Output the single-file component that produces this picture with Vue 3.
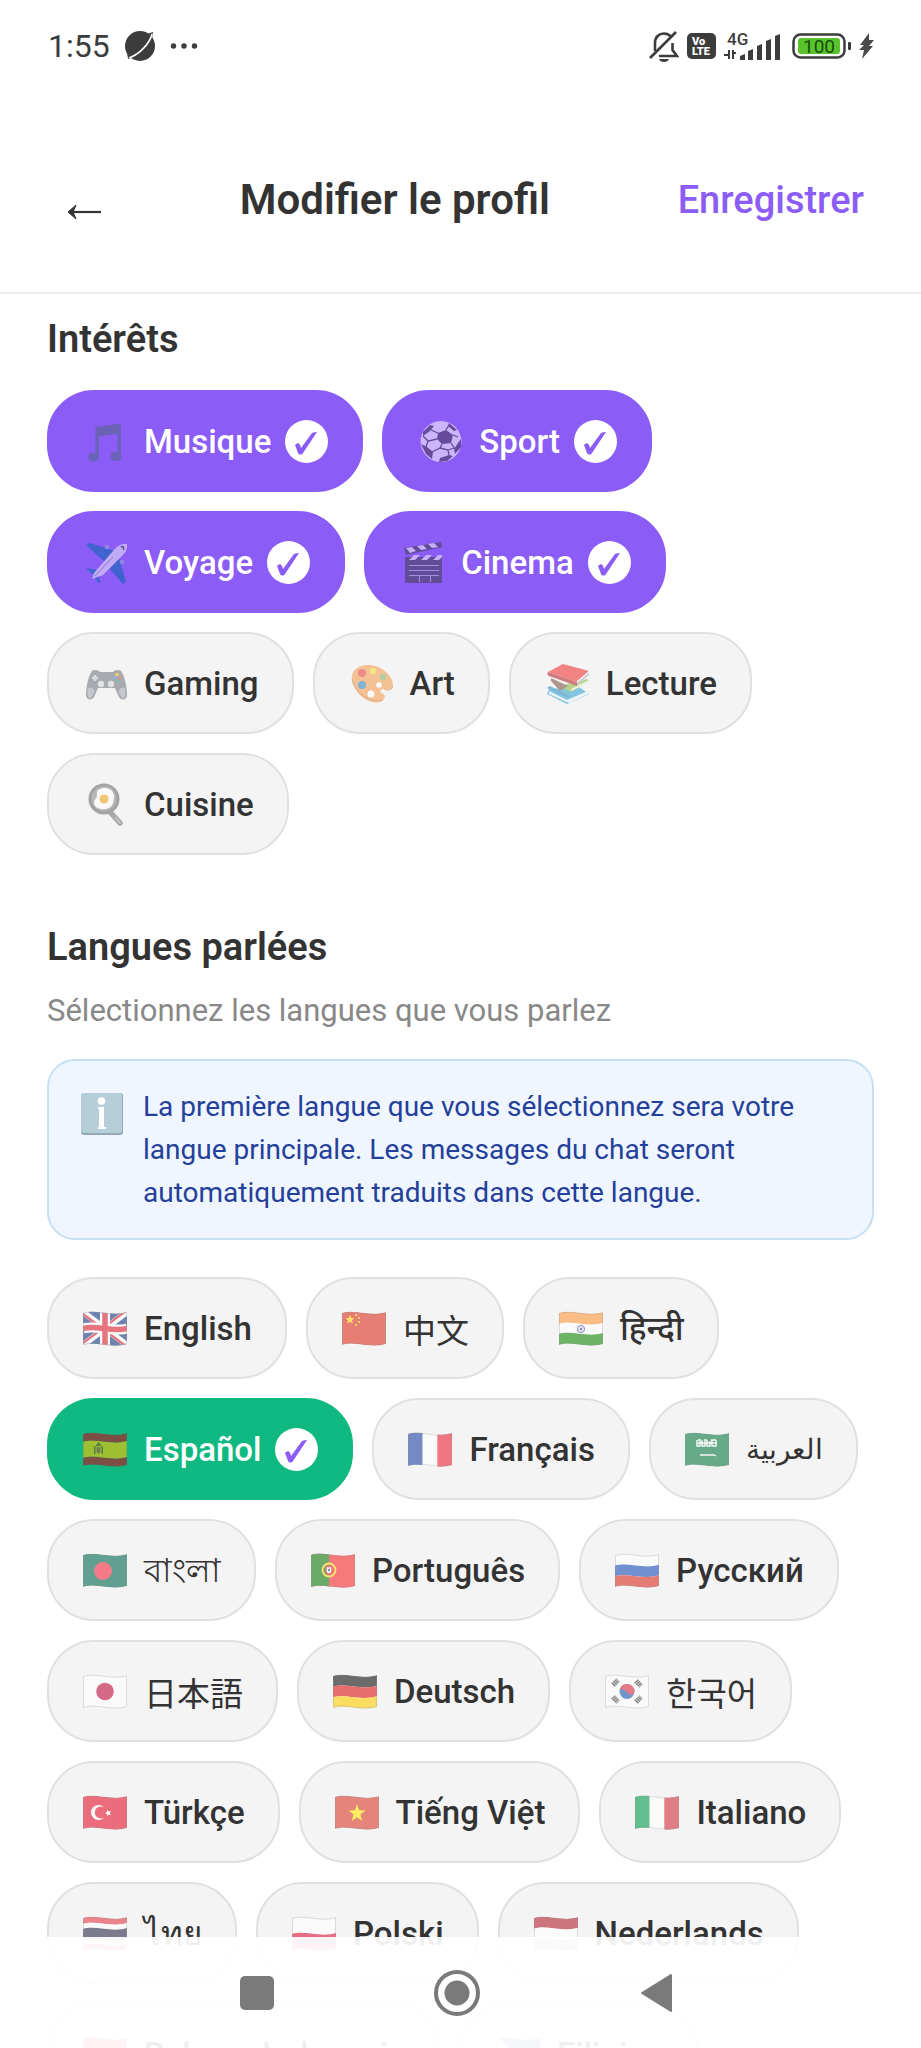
<script setup>
import { ref } from 'vue'

// one wavy stripe of a flag, y0..y1 inside a 44x32 flag
const band = (fill, y0, y1) =>
  `<path fill="${fill}" d="M0 ${y0 + 7}C13 ${y0 + 3} 29 ${y0 + 11} 44 ${y0 + 6}V${y1 + 6}C29 ${y1 + 11} 13 ${y1 + 3} 0 ${y1 + 7}Z"/>`
const column = (fill, x0, x1) => `<rect fill="${fill}" x="${x0}" y="4" width="${x1 - x0}" height="38"/>`
const flag = (inner) =>
  `<g clip-path="url(#wave)">${inner}</g><path fill="none" stroke="#555" stroke-opacity=".3" d="M.5 7.3C13 3.5 29 11.3 43.5 6.7V37.5C29 42.2 13 34.2.5 38.4Z"/>`

const icons = {
  music: `<path fill="#56688f" d="M12.500 8 38 4.500V37h-3.500V15L16 17.500V38h-3.500z"/><ellipse cx="10.500" cy="38" rx="5.500" ry="4.500" fill="#56688f"/><ellipse cx="33" cy="37.500" rx="5.500" ry="4.500" fill="#56688f"/>`,
  ball: `<circle cx="23" cy="22.500" r="20.500" fill="#f7f0ff"/><g fill="#4c405d"><path d="m20 14 8-3 7 5-2 8-9 1-5-5z"/><path d="M5 13 12 6l4 1-4 5-7 5zM31 4l8 7-3 1-6-5zM40 24l3-4v8l-6 7-1-5zM9 28l6 5-1 7-6-5-5-10zM22 39l9-3 4 1-6 5-8 1z"/></g><path fill="none" stroke="#4c405d" stroke-width="1.300" d="M20 14 13 11M28 11l3-5M35 16l5 2M33 24l4 6M24 25l-2 4-8 4M19 20l-9 2-2 6M22 29l8 2 1 5M30 31l6-2M10 22l-5-5"/>`,
  plane: `<path fill="#0f68b8" d="M3 5 7 3l25 8-9 12zM36 18l7 23-3 3-14-16zM3 28l12 2-4 6zM14 35l4 7-3 1-3-6z"/><circle cx="24" cy="7" r="2.300" fill="#9aa5d8"/><circle cx="39" cy="22" r="2.300" fill="#9aa5d8"/><path fill="#e6e0f5" d="M44 4c1 4-1 8-4 11L20 35 9 39l2-6 19-22c4-5 9-8 14-7z"/><path fill="none" stroke="#39445c" stroke-width="1.600" d="M38 7c2-1 3 0 2.500 3"/><path stroke="#8f88c4" d="m12 36 18-19"/>`,
  clap: `<path fill="#46425a" d="M5 17h37v26H5z"/><path fill="#46425a" d="m4 8 37-6 1 5L6 15z"/><g fill="#efe6fb"><path d="m6 8 6-1 4 4-6 2zM17 6l6-1 4 4-6 1zM28 4l6-1 4 4-6 1zM9 20l5-5h6l-5 5zM21 20l5-5h6l-5 5zM33 20l5-5h4v2l-3 3z"/></g><path stroke="#b9acd8" d="M9 25.500h30M9 30.500h30M9 35.500h30M19.500 36v6M30.500 36v6"/>`,
  pad: `<path fill="#747982" d="M9 10c2-2 7-1 8 1h13c1-2 6-3 8-1 4 5 6 17 6 24 0 5-6 6-8 2l-4-9H15l-4 9c-2 4-8 3-8-2 0-7 2-19 6-24z"/><path fill="#a7aab3" d="M5 27c4-1 7 1 6 5l-3 5c-3 1-4-2-3-10zM42 27c-4-1-7 1-6 5l3 5c3 1 4-2 3-10z"/><path stroke="#c9cbd0" stroke-width="2.600" d="M12 14v6M9 17h6"/><circle cx="18" cy="23" r="3.200" fill="#d6d7da"/><circle cx="28" cy="23" r="3.200" fill="#d6d7da"/><circle cx="34" cy="13.500" r="1.800" fill="#f5b912"/><circle cx="31.500" cy="16.500" r="1.500" fill="#4a90d9"/><circle cx="37" cy="16.500" r="1.500" fill="#e0543f"/><circle cx="34" cy="19.500" r="1.500" fill="#2ea58a"/>`,
  palette: `<path fill="#f5a056" d="M18 4c12-1 25 9 26 19 0 6-5 6-9 5-4 0-5 3-1 5 3 1 2 5-1 7-6 4-19 0-26-11C0 19 1 5 18 4z"/><path fill="none" stroke="#c97f45" d="M3 18c3 14 18 25 31 21M35 28c4 2 8 1 9-3"/><circle cx="13" cy="12" r="4" fill="#e8483f"/><circle cx="24" cy="10" r="3.300" fill="#f5dc3c"/><circle cx="34" cy="16" r="3.300" fill="#88b868"/><circle cx="13" cy="24" r="4" fill="#3487c0"/><circle cx="30" cy="24" r="2.800" fill="#fff"/><circle cx="22" cy="33" r="3.500" fill="#fff"/>`,
  books: `<path fill="#3ba7d6" d="m2 33 20 10 22-10-10-7-30 2z"/><path fill="#e8f4fb" d="m4 30 18 9 21-9v3L24 42 4 33z"/><path fill="#2f93c2" d="m2 27 20 10 3-2L5 25z"/><path fill="#8bbf45" d="m18 24 24-6 2 3-18 10-8-4z"/><path fill="#eef2e4" d="m26 28 18-9v3l-18 8z"/><path fill="#7c5a4b" d="m6 17 17 8-8 5-9-10z"/><path fill="#f03a38" d="M18 3 44 10 32 21 3 11z"/><path fill="#ececec" d="M44 10v5L32 24v-4z"/><path fill="#b92c33" d="m3 11 29 10v4L4 15c-2-1-2-3-1-4z"/><path fill="none" stroke="#777" d="m32 23 12-10"/>`,
  pan: `<path stroke="#777" stroke-width="5.500" stroke-linecap="round" d="m28 31 9 10"/><path stroke="#aaa" stroke-width="2" stroke-linecap="round" d="m33 36 4 5"/><circle cx="21" cy="17" r="15.500" fill="#6d6f70"/><circle cx="21" cy="16.500" r="12.500" fill="#8d8f90"/><path fill="#fff" d="M17 7c4-2 13-2 14 7 0 5-1 12-8 13-5 1-12-1-12-6 0-4 3-4 3-8 0-3 0-5 3-6z"/><circle cx="21" cy="17" r="4.600" fill="#f5a623"/>`,
  gb: flag(`<path fill="#15387f" d="M0 4h44v38H0z"/><path stroke="#fff" stroke-width="6" d="M0 6 44 39M0 39 44 6"/><path stroke="#dd2033" stroke-width="2.200" d="m0 8 44 33M0 37 44 4"/><path stroke="#fff" stroke-width="10" d="M22 4v38"/><path fill="none" stroke="#fff" stroke-width="10" d="M0 22.500c13-4 29 4 44 0"/><path stroke="#dd2033" stroke-width="5.500" d="M22 4v38"/><path fill="none" stroke="#dd2033" stroke-width="5.500" d="M0 22.500c13-4 29 4 44 0"/>`),
  cn: flag(`${band('#e0301e', 0, 32)}<g fill="#ffde02"><path d="m8 9 1.300 3 3.200.2-2.500 2 .9 3.200L8 15.700l-2.800 1.700.9-3.200-2.500-2 3.200-.2z"/><circle cx="14" cy="9" r="1.100"/><circle cx="17" cy="12" r="1.100"/><circle cx="17" cy="16" r="1.100"/><circle cx="14" cy="19" r="1.100"/></g>`),
  in: flag(`${band('#ff9a3c', 0, 11)}${band('#fff', 11, 21)}${band('#128807', 21, 32)}<circle cx="22" cy="23" r="3.600" fill="#dfe0f2" stroke="#3a3a9c" stroke-width=".9"/><circle cx="22" cy="23" r="1.200" fill="#3a3a9c"/>`),
  es: flag(`${band('#c60a1d', 0, 8)}${band('#ffc400', 8, 24)}${band('#c60a1d', 24, 32)}<path fill="#7d5a1b" d="M11 19h1.500v8H11zM18.500 19H20v8h-1.500zM13 18l2.500-3 2.500 3v1h-5z"/><path fill="#b4552d" d="M13.500 20h4v5l-2 2-2-2z"/>`),
  fr: flag(column('#2144a6', 0, 14.67) + column('#fff', 14.67, 29.33) + column('#ee2436', 29.33, 44)),
  sa: flag(`${band('#087a45', 0, 32)}<path stroke="#fff" stroke-width="1.400" fill="none" d="M12 13v6h3v-5m2-1v6h3v-5m2-1v6h3v-5m2-1v6h4v-6M12 16h20M13 13h3m3 0h3m4 0h5"/><path stroke="#fff" stroke-width="1.300" d="M15 28h14l2 1"/>`),
  bd: flag(`${band('#006a4e', 0, 32)}<circle cx="20" cy="23" r="9" fill="#f42a41"/>`),
  pt: flag(`${column('#f92a2c', 0, 44)}${column('#13790f', 0, 18)}<circle cx="18" cy="22" r="6.500" fill="none" stroke="#ffe017" stroke-width="1.800"/><path fill="#fff" stroke="#e22" stroke-width="1.500" d="M15 18.500h6V23c0 4-6 4-6 0z"/><circle cx="18" cy="22" r="1.200" fill="#26477d"/>`),
  ru: flag(band('#fff', 0, 10.7) + band('#1b4fb8', 10.7, 21.3) + band('#de2f20', 21.3, 32)),
  jp: flag(`${band('#fff', 0, 32)}<circle cx="22" cy="22.500" r="8.800" fill="#c01040"/>`),
  de: flag(band('#111', 0, 10.7) + band('#dd1414', 10.7, 21.3) + band('#ffce00', 21.3, 32)),
  kr: flag(`${band('#fff', 0, 32)}<circle cx="22" cy="22.500" r="7.500" fill="#1d55b5"/><path fill="#dc2a40" d="M15 20c1-4 7-7 12-3 3 3 3 6 2 7-2 3-5 2-7-1-2-2-5-3-7-3z"/><g stroke="#333" stroke-width="5" stroke-dasharray="1.500 .6"><path d="m8 16 5-5M31 33l5-5M8 28l5 5M31 12l5 5"/></g>`),
  tr: flag(`${band('#e6152b', 0, 32)}<circle cx="15.500" cy="22.500" r="7.500" fill="#fff"/><circle cx="17.800" cy="22.500" r="6" fill="#e6152b"/><path fill="#fff" d="m22 23 2-.9v-2.400l1.600 1.800 2.500-.7-1.300 2.200 1.300 2.200-2.500-.6-1.600 1.900v-2.500z"/>`),
  vn: flag(`${band('#da3a2c', 0, 32)}<path fill="#ffeb00" d="m22 14 2 6.300 6.500.2-5.100 4 1.900 6.500-5.300-3.800-5.300 3.800 1.900-6.500-5.100-4 6.500-.2z"/>`),
  it: flag(column('#009b4d', 0, 14.67) + column('#fff', 14.67, 29.33) + column('#d4303e', 29.33, 44)),
  th: flag(band('#e63946', 0, 6) + band('#fff', 6, 11) + band('#2d2a4a', 11, 22) + band('#fff', 22, 27) + band('#f04050', 27, 32)),
  pl: flag(band('#fff', 0, 16) + band('#dc143c', 16, 32)),
  nl: flag(band('#b5202f', 0, 10.7) + band('#fff', 10.7, 21.3) + band('#6d94c9', 21.3, 32)),
  id: flag(band('#e8202c', 0, 16) + band('#fff', 16, 32)),
  ph: flag(`${band('#2a62b8', 0, 16)}${band('#ce1126', 16, 32)}<path fill="#fff" d="M0 4 22 23 0 42z"/>`)
}

const interests = ref([
  { label: 'Musique', icon: 'music', on: true },
  { label: 'Sport', icon: 'ball', on: true },
  { label: 'Voyage', icon: 'plane', on: true },
  { label: 'Cinema', icon: 'clap', on: true },
  { label: 'Gaming', icon: 'pad', on: false },
  { label: 'Art', icon: 'palette', on: false },
  { label: 'Lecture', icon: 'books', on: false },
  { label: 'Cuisine', icon: 'pan', on: false }
])

const languages = ref([
  { label: 'English', icon: 'gb', lang: 'en', on: false },
  { label: '中文', icon: 'cn', lang: 'zh', on: false },
  { label: 'हिन्दी', icon: 'in', lang: 'hi', on: false },
  { label: 'Español', icon: 'es', lang: 'es', on: true },
  { label: 'Français', icon: 'fr', lang: 'fr', on: false },
  { label: 'العربية', icon: 'sa', lang: 'ar', on: false },
  { label: 'বাংলা', icon: 'bd', lang: 'bn', on: false },
  { label: 'Português', icon: 'pt', lang: 'pt', on: false },
  { label: 'Русский', icon: 'ru', lang: 'ru', on: false },
  { label: '日本語', icon: 'jp', lang: 'ja', on: false },
  { label: 'Deutsch', icon: 'de', lang: 'de', on: false },
  { label: '한국어', icon: 'kr', lang: 'ko', on: false },
  { label: 'Türkçe', icon: 'tr', lang: 'tr', on: false },
  { label: 'Tiếng Việt', icon: 'vn', lang: 'vi', on: false },
  { label: 'Italiano', icon: 'it', lang: 'it', on: false },
  { label: 'ไทย', icon: 'th', lang: 'th', on: false },
  { label: 'Polski', icon: 'pl', lang: 'pl', on: false },
  { label: 'Nederlands', icon: 'nl', lang: 'nl', on: false },
  { label: 'Bahasa Indonesia', icon: 'id', lang: 'id', on: false },
  { label: 'Filipino', icon: 'ph', lang: 'fil', on: false }
])

const toggle = (item) => {
  item.on = !item.on
}
</script>

<template>
  <div class="screen">
    <svg class="defs" width="0" height="0" aria-hidden="true">
      <clipPath id="wave"><path d="M0 7C13 3 29 11 44 6V38C29 43 13 35 0 39Z" /></clipPath>
    </svg>

    <div class="status-bar">
      <div class="status-left">
        <span class="clock">1:55</span>
        <svg width="32" height="32" viewBox="0 0 32 32">
          <circle cx="16" cy="16" r="15" fill="#3c3c3c" />
          <path fill="#3c3c3c" d="m23 4 6-2-1 7zM3 22l1 7 7-2z" />
          <path fill="none" stroke="#fff" stroke-width="1.600" d="M28 4C26 13 16 24 5 28" />
        </svg>
        <svg class="dots" width="28" height="8" viewBox="0 0 28 8" fill="#3c3c3c">
          <circle cx="3.500" cy="4" r="2.700" /><circle cx="14" cy="4" r="2.700" /><circle cx="24.500" cy="4" r="2.700" />
        </svg>
      </div>
      <div class="status-right">
        <svg width="30" height="32" viewBox="0 0 30 32" fill="none" stroke="#3c3c3c" stroke-width="2.600">
          <path d="M6 21V13C6 7 10 3.500 15 3.500c3 0 5 1 7 3M23.500 13v7l4.500 6H10" />
          <path d="M1 28 27 2" />
          <path fill="#3c3c3c" stroke="none" d="M10 29h10c-1 4-9 4-10 0z" />
        </svg>
        <svg width="29" height="26" viewBox="0 0 29 26">
          <rect width="29" height="26" rx="5" fill="#3c3c3c" />
          <text class="volte" x="5" y="12">Vo</text>
          <text class="volte" x="5" y="22">LTE</text>
        </svg>
        <svg width="57" height="38" viewBox="0 -4 57 38" fill="#3c3c3c">
          <text class="network" x="3" y="14">4G</text>
          <path d="M4 19h2v9H4zM0 23h4v2H0zM8 19h2v9H8zM10 21h2v2h-2z" />
          <path d="m16 25 5-2v6h-5zM24 20l5-2v11h-5zM33 15l5-2v16h-5zM42 10l5-2v21h-5zM51 5l5-2v26h-5z" />
        </svg>
        <svg class="battery" width="59" height="28" viewBox="0 0 59 28">
          <rect x="1.500" y="2.500" width="51" height="23" rx="7" fill="#fff" stroke="#3c3c3c" stroke-width="2.500" />
          <rect x="6" y="6" width="42" height="16" rx="3" fill="#5ac22b" />
          <rect x="56" y="10" width="3" height="8" rx="1" fill="#3c3c3c" />
          <text class="charge" x="27" y="21" text-anchor="middle">100</text>
        </svg>
        <svg width="15" height="26" viewBox="0 0 15 26" fill="#4a4a4a"><path d="M10 0 1 12h4l-5 5h5L3 26 14 13h-4l5-6h-5z" /></svg>
      </div>
    </div>

    <header class="header">
      <button class="back" type="button" aria-label="Retour">
        <svg width="75" height="58" viewBox="0 0 75 58" fill="none" stroke="#333" stroke-width="2.200">
          <path d="M54 41H22" />
          <path fill="#333" stroke-width="1" d="m29 34-8 7 8 7-3-7z" />
        </svg>
      </button>
      <h1>Modifier le profil</h1>
      <button class="save" type="button">Enregistrer</button>
    </header>

    <main class="content">
      <h2>Intérêts</h2>
      <div class="chips">
        <button
          v-for="item in interests"
          :key="item.icon"
          type="button"
          class="chip"
          :class="{ selected: item.on }"
          :aria-pressed="item.on"
          @click="toggle(item)"
        >
          <svg class="emoji" viewBox="0 0 44 44" v-html="icons[item.icon]"></svg>
          <span class="label">{{ item.label }}</span>
          <span v-if="item.on" class="check">
            <svg viewBox="0 0 43 43"><path d="M10 25c3-3 5-2 6 3L27 13c2-1 4-1 5-1L18 33c-1 2-4 2-5 0z" /></svg>
          </span>
        </button>
      </div>

      <h2 class="second">Langues parlées</h2>
      <p class="hint">Sélectionnez les langues que vous parlez</p>

      <div class="info">
        <svg class="info-icon" viewBox="0 0 44 44">
          <rect x="1" y="1" width="42" height="42" rx="3" fill="#92aab8" />
          <rect x="1" y="1" width="41" height="40" rx="3" fill="#b5ced9" />
          <circle cx="21.500" cy="9" r="3.800" fill="#fff" />
          <path fill="#fff" d="M18 15h6v20h2v2h-8v-2h1V17h-1z" />
        </svg>
        <p>La première langue que vous sélectionnez sera votre langue principale. Les messages du chat seront automatiquement traduits dans cette langue.</p>
      </div>

      <div class="chips languages">
        <button
          v-for="item in languages"
          :key="item.icon"
          type="button"
          class="chip"
          :class="{ selected: item.on }"
          :aria-pressed="item.on"
          @click="toggle(item)"
        >
          <svg class="emoji" viewBox="0 0 44 44" v-html="icons[item.icon]"></svg>
          <span class="label" :lang="item.lang">{{ item.label }}</span>
          <span v-if="item.on" class="check">
            <svg viewBox="0 0 43 43"><path d="M10 25c3-3 5-2 6 3L27 13c2-1 4-1 5-1L18 33c-1 2-4 2-5 0z" /></svg>
          </span>
        </button>
      </div>
    </main>

    <nav class="nav-bar">
      <button type="button" aria-label="Applications récentes">
        <svg viewBox="0 0 48 48"><rect x="7" y="7" width="34" height="34" rx="5" fill="#7a7a7a" /></svg>
      </button>
      <button type="button" aria-label="Accueil">
        <svg viewBox="0 0 48 48">
          <circle cx="24" cy="24" r="21" fill="#fff" stroke="#7a7a7a" stroke-width="4" />
          <circle cx="24" cy="24" r="12.500" fill="#7a7a7a" />
        </svg>
      </button>
      <button type="button" aria-label="Précédent">
        <svg viewBox="0 0 48 48"><path fill="#7a7a7a" stroke="#7a7a7a" stroke-width="2" stroke-linejoin="round" d="M9 24 38 6v36z" /></svg>
      </button>
    </nav>
  </div>
</template>

<style>
body { margin: 0; background: #fff; }
</style>

<style scoped>
.screen {
  position: relative;
  display: flex;
  flex-direction: column;
  height: 100vh;
  overflow: hidden;
  background: #fff;
  color: #333;
  font-family: Roboto, "Noto Sans", "Noto Sans CJK SC", sans-serif;
}
.defs { position: absolute; }
button { margin: 0; padding: 0; border: none; background: none; font: inherit; color: inherit; cursor: pointer; }
svg { display: block; flex: none; }

.status-bar { display: flex; justify-content: space-between; align-items: center; flex: none; height: 92px; padding: 0 47px 0 48px; }
.status-left, .status-right { display: flex; align-items: center; }
.clock { font-size: 32px; line-height: 36px; color: #3c3c3c; margin-right: 14px; }
.dots { margin-left: 14px; }
.status-right { gap: 8px; }
.battery { margin-left: 3px; }
.volte { font-size: 11px; font-weight: 900; fill: #fff; }
.network { font-size: 17px; font-weight: 500; }
.charge { font-size: 19px; fill: #174d0b; }

.header {
  display: flex;
  justify-content: space-between;
  align-items: center;
  flex: none;
  padding: 79px 47px 63px;
  border-bottom: 2px solid #eee;
}
.back { height: 58px; }
h1 { margin: 0; font-size: 42px; line-height: 50px; font-weight: 600; }
.save { padding: 0 10px; font-size: 38px; line-height: 58px; font-weight: 500; color: #8b5cf6; }

.content { flex: 1; min-height: 0; overflow: hidden; padding: 23px 47px 0; }
h2 { margin: 0 0 29px; font-size: 38px; line-height: 44px; font-weight: 600; }
h2.second { margin: 70px 0 24px; }
.hint { margin: 0 0 30px; font-size: 31px; line-height: 36px; color: #888; }

.chips { display: flex; flex-wrap: wrap; gap: 19px; }
.chip {
  display: flex;
  align-items: center;
  gap: 14px;
  height: 102px;
  padding: 0 33px;
  border: 2px solid #e0e0e0;
  border-radius: 47px;
  background: #f4f4f4;
  font-size: 33px;
  line-height: 40px;
  font-weight: 500;
  white-space: nowrap;
}
.chip.selected { border-color: #8b5cf6; background: #8b5cf6; color: #fff; }
.languages .chip.selected { border-color: #10b981; background: #10b981; }
.emoji { width: 44px; height: 44px; margin: 0 3px 0 1px; opacity: 0.6; }
.label { padding-top: 2px; }
.label:lang(zh) { font-family: "Noto Sans CJK SC", sans-serif; font-weight: 400; }
.label:lang(ja) { font-family: "Noto Sans CJK JP", sans-serif; font-weight: 400; }
.label:lang(ko) { font-family: "Noto Sans CJK KR", sans-serif; font-weight: 400; }
.label:lang(th) { font-weight: 400; }
.label:lang(ar) { font-size: 28px; font-weight: 400; }
.check { width: 43px; height: 43px; border-radius: 50%; background: #fff; }
.check path { fill: #8b5cf6; }

.info {
  display: flex;
  gap: 19px;
  margin-bottom: 37px;
  padding: 24px 31px;
  border: 2px solid #c6dff3;
  border-radius: 28px;
  background: #eff6ff;
}
.info-icon { width: 44px; height: 44px; margin-top: 7px; }
.info p { margin: 0; font-size: 28px; line-height: 43px; color: #24409a; }

.nav-bar {
  position: absolute;
  right: 0;
  bottom: 0;
  left: 0;
  display: flex;
  justify-content: center;
  align-items: center;
  gap: 152px;
  height: 111px;
  padding-right: 7px;
  box-sizing: border-box;
  background: rgba(255, 255, 255, 0.92);
}
.nav-bar svg { width: 48px; height: 48px; }
</style>
